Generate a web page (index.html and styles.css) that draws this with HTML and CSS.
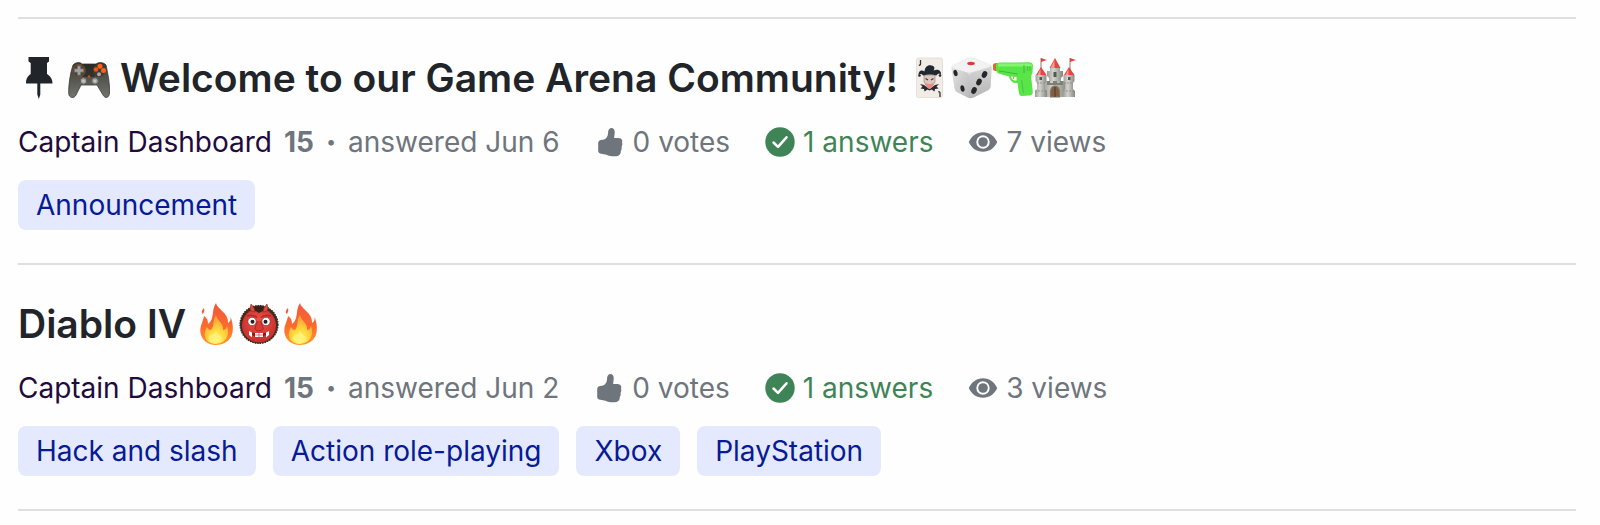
FILE: index.html
```
<!DOCTYPE html>
<html lang="en">
<head>
<meta charset="utf-8">
<meta name="viewport" content="width=device-width, initial-scale=1">
<title>Game Arena Community</title>
<link rel="stylesheet" href="styles.css">
</head>
<body>
<svg class="sprite" aria-hidden="true">
  <defs>
    <linearGradient id="pad" x1="0" y1="0" x2="0" y2="1"><stop offset="0" stop-color="#34352f"/><stop offset=".4" stop-color="#50514b"/><stop offset="1" stop-color="#73746e"/></linearGradient>
    <linearGradient id="fire" x1="0" y1="0" x2="0" y2="1"><stop offset="0" stop-color="#f4573c"/><stop offset=".55" stop-color="#fa6b2e"/><stop offset="1" stop-color="#ff9a2d"/></linearGradient>
    <radialGradient id="flame" cx=".5" cy=".85" r=".8"><stop offset="0" stop-color="#fff36b"/><stop offset=".45" stop-color="#ffd83c"/><stop offset="1" stop-color="#ff9838"/></radialGradient>
    <linearGradient id="stone" x1="0" y1="0" x2="1" y2="0"><stop offset="0" stop-color="#9c9e96"/><stop offset=".4" stop-color="#d3d4cd"/><stop offset="1" stop-color="#85877f"/></linearGradient>
    <radialGradient id="skin" cx=".5" cy=".4" r=".6"><stop offset="0" stop-color="#ef5548"/><stop offset="1" stop-color="#c92c2b"/></radialGradient>
    <linearGradient id="dieL" x1="0" y1="0" x2="1" y2="1"><stop offset="0" stop-color="#e2e2e2"/><stop offset="1" stop-color="#b9b9b9"/></linearGradient>
    <linearGradient id="dieR" x1="0" y1="0" x2="0" y2="1"><stop offset="0" stop-color="#d5d5d5"/><stop offset="1" stop-color="#b5b5b5"/></linearGradient>
  </defs>
  <symbol id="i-pin" viewBox="0 0 42 42"><path fill="#212529" d="M10.500 0h20.500v4.500l-2 1.500v11c3 2 5.500 4.500 5.500 9.500H22.300v11l-1.500 4.500-1.500-4.500v-11H8c0-5 1.800-7.500 4.700-9.500V6l-2.200-1.500z"/></symbol>
  <symbol id="i-gamepad" viewBox="0 0 42 42">
    <path fill="url(#pad)" stroke="#3b3c37" stroke-width=".8" d="M5 8C8 5 12 5 14 7h14c3-2 7-2 10 1 2 9 4 19 3.500 28-.2 5-4.500 6-6.500 2l-6-10H13L8 38C6 42 1 41 .7 36.500 .5 28 2 17 5 8z"/>
    <path fill="#25261f" d="M14 7h14l-1 13H15z" opacity=".7"/>
    <circle cx="11" cy="13.500" r="6.300" fill="#45433c" stroke="#8a4a28" stroke-width=".8"/>
    <path fill="#a0a19c" stroke="#62635e" stroke-width=".6" d="M9.300 8.800h3.400v3h3v3.400h-3v3H9.300v-3h-3v-3.400h3z"/>
    <circle cx="31" cy="13.500" r="6.300" fill="#3e3b35"/>
    <g fill="#ff6215"><circle cx="32" cy="9.300" r="2.500"/><circle cx="35.500" cy="13.500" r="2.500"/></g><circle cx="28" cy="12.500" r="2.200" fill="#f05518"/><circle cx="31" cy="17.300" r="2" fill="#aaa9a4"/>
    <circle cx="21" cy="19.500" r="1.200" fill="#c95019"/>
    <g fill="#a5a6a1" stroke="#5a5b56"><circle cx="15.500" cy="24" r="3.300"/><circle cx="27" cy="24" r="3.300"/></g>
    <g fill="#c5c6c1"><circle cx="15.500" cy="24" r="1.300"/><circle cx="27" cy="24" r="1.300"/></g>
  </symbol>
  <symbol id="i-joker" viewBox="0 0 42 42">
    <rect x="8.500" y="1" width="26" height="39.500" rx="2" fill="#f1ece5" stroke="#ded7cf" stroke-width=".7"/>
    <path fill="none" stroke="#33302f" stroke-width="1.300" d="M12.500 3v4q0 1.500-1.700 1.200M32 40v-4q0-1.500-1.700-1.200"/>
    <path fill="#272b30" d="M12 27l4 1 5.500 4 5.500-4 4-1-2.500 2.500 2 2-3.500.5-.5 2.500-3-2-2 1-2-1-3 2-.5-2.500-3.500-.5 2-2z"/>
    <path fill="#dcc8bf" stroke="#8b6862" stroke-width=".5" d="M16 18h11v7l-2.500 4-3 2-3-2-2.500-4z"/>
    <path fill="#f08a86" d="M17 25.500q4.500 3 9 0l-2 5-2.500 1.500-2.500-1.500z"/>
    <path stroke="#4a3a38" stroke-width="1.200" d="M17.500 21.500l2.500 1.500M25.500 21.500L23 23"/>
    <path fill="#222830" d="M15 18.500c-1-2-4-2-4.300 0-.7-5 3.300-6 5.800-4 .5-5 3.500-7 7-6 3.500.8 3.500 3 2 5 4-2 8.500 0 7.300 4.500-1-2-3.500-1.500-4.300.5q-6.500-2-13.500 0z"/>
    <g fill="#222830"><circle cx="11.500" cy="18.500" r="1.300"/><circle cx="32" cy="18.500" r="1.300"/></g>
  </symbol>
  <symbol id="i-die" viewBox="0 0 42 42">
    <path fill="#e0e0e0" d="M3 8Q1 9 1.500 12l3 19q.4 3 3 4.500l10 5q3 1 6 0l14-7q3-1.500 3.200-5L42 11q0-3-3-4L24 1q-3-1-6 0z"/>
    <path fill="#f2f2f2" d="M3 8l15-6.500q3-1.200 6 0l15 5.500q3 1.500 0 3l-17 5q-3 1-6 0L3 11q-2-1.500 0-3z"/>
    <path fill="url(#dieL)" d="M2 11l15 4.500q2 1 2.200 4L19 41 7 35Q5 34 4.500 31z"/><path fill="url(#dieR)" d="M41 10l-20 6q-2 1-2 4v21q2 .5 5-.8l13.500-6.700q3-1.500 3.200-5z"/>
    <ellipse cx="21" cy="6.500" rx="3.800" ry="1.700" fill="#e03737"/><g fill="#25262a"><ellipse cx="5.500" cy="16" rx="2" ry="3.200" transform="rotate(-15 5.500 16)"/><ellipse cx="12.500" cy="31.500" rx="2" ry="3.200" transform="rotate(-12 12.500 31.500)"/><ellipse cx="34.500" cy="17.500" rx="2.600" ry="3.500" transform="rotate(25 34.500 17.500)"/><ellipse cx="29" cy="25" rx="2.600" ry="3.500" transform="rotate(25 29 25)"/><ellipse cx="24" cy="33.500" rx="2.600" ry="3.500" transform="rotate(25 24 33.500)"/></g>
  </symbol>
  <symbol id="i-pistol" viewBox="0 0 42 42">
    <path fill="#df692c" d="M1 8q0-2 4-2v8q-4 0-4-2z"/>
    <path fill="#59e448" d="M4 7q1-1.500 4-1.500l29-.2q3.500.2 4 3L40.500 16q-1.500 2-1.200 5l1.500 14q0 3-3 3.500l-8 .5q-2.500 0-2.800-2.500L25.500 26q-7 1-8.500-6.500L6.500 16.500Q4 15 4 12z"/>
    <path fill="#82f66f" d="M6 6.500h31q3 0 3.500 3H6z"/><path fill="none" stroke="#3fba3c" d="M7 14l19 3M32 8v8"/><path fill="#fff" d="M19 19.500l5.500.5v3.500q-4.500.5-5.500-4z"/><path stroke="#c89c62" stroke-width="1.300" d="M21.500 19.500v2.500"/>
    <path fill="none" stroke="#45cc40" stroke-width="1.200" d="M29.500 23l2 13M35.500 9v5M38 9v5"/>
  </symbol>
  <symbol id="i-castle" viewBox="0 0 42 42">
    <path fill="url(#stone)" d="M13 14h3v-3h10v3h3v5l-2 2v19H15V21l-2-2z"/>
    <path fill="url(#stone)" d="M9 24h24v16H9z"/>
    <path fill="url(#stone)" d="M1.500 18h11v6L11 26v6l2 2v6H1v-6l2-2v-6l-1.500-2z"/>
    <path fill="url(#stone)" d="M29.500 18h11v6L39 26v6l2 2v6H29v-6l2-2v-6l-1.500-2z"/>
    <path fill="#7d8077" d="M13 24h3v2h3v-2h4v2h3v-2h3v4H13z"/>
    <path fill="#e54642" d="M21 1l5.500 10h-11zM7 10l5.500 8H2zM35 10l5.500 8H30zM7 1l6 2-6 2zM36 1l6 2-6 2z"/><path stroke="#985047" stroke-width=".8" d="M7 1v11M36 1v12"/>
    <path fill="#f59b94" d="M20.500 3v8h-4zM6.500 12v6h-3zM34.500 12v6h-3z"/><path fill="#555850" d="M19.500 15h3v5h-3zM5.500 20h2.500v3H5.500zM34 20h2.500v3H34z"/>
    <path fill="#855d40" stroke="#797a71" stroke-width="1.200" d="M16.500 40v-6q1-5 4.500-5t4.500 5v6z"/><path stroke="#513826" d="M21 30v10"/><path fill="none" stroke="#8a8c83" stroke-width=".8" stroke-dasharray="2 1" d="M3 26h9m18 0h9M1 34h12m16 0h12"/>
  </symbol>
  <symbol id="i-fire" viewBox="0 0 42 42">
    <path fill="url(#fire)" d="M20 0c1 6 13 10 12 20 2-1 3-3 2.500-6 3 7 3 14 1 19-3 6-9 9-16 9S6 38 4.500 30C3.500 23 7 19 8 13c3 2 4 4 4 8 7-5 3-14 8-21zM8 5q1 4-1.500 6Q4.500 8 8 5z"/>
    <path fill="url(#flame)" d="M20 12c1 6 8 8 7 15 2 0 3-1 4-4 3 8 0 17-11 18-10 0-14-9-9-17 1 2 2 3 4 3 4-5 1-9 5-15z"/><path fill="#fff47d" opacity=".8" d="M20 27c0 5 6 4 6 9s-12 6-13 1c-1-4 1-4 2-6 1 2 4 0 5-4z"/>
  </symbol>
  <symbol id="i-ogre" viewBox="0 0 42 42">
    <circle cx="21" cy="21.500" r="19" fill="#442a21" stroke="#35261c" stroke-width="1.200" stroke-dasharray="1.500 1"/><circle cx="21" cy="22.500" r="17" fill="url(#skin)"/><path fill="#352218" d="M12 7Q21 0 30 7q-5 0-9 3-4-3-9-3z"/>
    <path fill="#e14b3c" stroke="#8d241d" stroke-width=".6" d="M13 1q4 4 4 8-4 0-5-3zM29 1q-4 4-4 8 4 0 5-3z"/>
    <path fill="none" stroke="#a82a25" stroke-width="1.200" d="M9 13q6-2 10 1.500M33 13q-6-2-10 1.500"/><g fill="#fff" stroke="#87231f" stroke-width=".7"><circle cx="14" cy="18.500" r="4.200"/><circle cx="28" cy="18.500" r="4.200"/></g><g fill="#222"><circle cx="14.500" cy="18.800" r="2"/><circle cx="27.500" cy="18.800" r="2"/></g>
    <path fill="#db3a35" stroke="#9a2020" stroke-width=".7" d="M19.500 18l-3 8q4.500 4 9 0l-3-8"/><path fill="#8a1c1c" d="M12 29q9 3 18 0-2 5-9 5-7 0-9-5z"/><path fill="#fff" d="M11 28l3 1.500v5l-3-2.500zM31 28l-3 1.500v5l3-2.500zM17 30h8v4h-8z"/><path stroke="#b64b45" stroke-width=".7" d="M21 30v4M17 32h8"/>
  </symbol>
  <symbol id="i-thumb" viewBox="0 0 30 30"><path fill="#6e757c" d="M16 1c2-.3 3.500 1.200 3.700 3.500.2 2.500-.6 4.500-.5 6.500 2.500.2 5.500-.5 7.300 1.200 1 1 .9 2 .5 3 .6 2 .3 3-.4 4.500.3 2 0 3-.8 4.300 0 2.500-.8 4.500-3.300 5-4 .5-8 .2-11-1.300L5 26.500C4 26 3.200 25 3.200 24v-7.500c0-3 2-3.500 5-3.700 3-.8 4.600-3 4.800-6C13 4 13.500 1.500 16 1z"/></symbol>
  <symbol id="i-check" viewBox="0 0 30 30"><circle cx="15" cy="15" r="14.700" fill="#3f8456"/><path fill="none" stroke="#fff" stroke-width="2.500" stroke-linecap="round" stroke-linejoin="round" d="M8.500 15.500l4.500 4.300 8.500-9.500"/></symbol>
  <symbol id="i-eye" viewBox="0 0 30 30"><path fill="#6e757c" fill-rule="evenodd" d="M.8 15C3.500 9 8.500 5.200 15 5.200S26.500 9 29.200 15C26.500 21 21.500 24.800 15 24.800S3.500 21 .8 15zM15 8.300a6.700 6.700 0 1 0 0 13.400 6.700 6.700 0 0 0 0-13.400z"/><circle cx="15" cy="15" r="4.800" fill="#6e757c"/></symbol>
</svg>
<main class="topics">
  <article class="topic">
    <h2 class="title">
      <svg class="emoji"><use href="#i-pin"/></svg>
      <a class="title-link" href="#"><svg class="emoji"><use href="#i-gamepad"/></svg><span>Welcome to our Game Arena Community!</span><span class="emoji-run"><svg class="emoji"><use href="#i-joker"/></svg><svg class="emoji"><use href="#i-die"/></svg><svg class="emoji"><use href="#i-pistol"/></svg><svg class="emoji"><use href="#i-castle"/></svg></span></a>
    </h2>
    <div class="meta">
      <div class="byline"><a class="author" href="#">Captain Dashboard</a><strong>15</strong><span class="dot">•</span><span>answered Jun 6</span></div>
      <span class="stat"><svg class="icon"><use href="#i-thumb"/></svg>0 votes</span>
      <span class="stat answered"><svg class="icon"><use href="#i-check"/></svg>1 answers</span>
      <span class="stat"><svg class="icon"><use href="#i-eye"/></svg>7 views</span>
    </div>
    <div class="tags"><a class="tag" href="#">Announcement</a></div>
  </article>
  <article class="topic">
    <h2 class="title">
      <a class="title-link" href="#"><span>Diablo IV</span><span class="emoji-run"><svg class="emoji"><use href="#i-fire"/></svg><svg class="emoji"><use href="#i-ogre"/></svg><svg class="emoji"><use href="#i-fire"/></svg></span></a>
    </h2>
    <div class="meta">
      <div class="byline"><a class="author" href="#">Captain Dashboard</a><strong>15</strong><span class="dot">•</span><span>answered Jun 2</span></div>
      <span class="stat"><svg class="icon"><use href="#i-thumb"/></svg>0 votes</span>
      <span class="stat answered"><svg class="icon"><use href="#i-check"/></svg>1 answers</span>
      <span class="stat"><svg class="icon"><use href="#i-eye"/></svg>3 views</span>
    </div>
    <div class="tags"><a class="tag" href="#">Hack and slash</a><a class="tag" href="#">Action role-playing</a><a class="tag" href="#">Xbox</a><a class="tag" href="#">PlayStation</a></div>
  </article>
</main>
</body>
</html>
```
FILE: styles.css
```
* { box-sizing: border-box; }
body {
  margin: 0;
  background: #fefefe;
  color: #6e757c;
  font: 28px/40px Inter, "Liberation Sans", sans-serif;
}
a { color: inherit; text-decoration: none; }
.sprite { position: absolute; width: 0; height: 0; }
.topics { margin: 17px 24px 0 18px; border-bottom: 2px solid #dfdfdf; }
.topic { padding: 33px 0; border-top: 2px solid #dfdfdf; }
.title {
  display: flex;
  align-items: center;
  gap: 8px;
  margin: 0;
  color: #212529;
  font-size: 39px;
  font-weight: 600;
  line-height: 52px;
}
.title-link { display: flex; align-items: center; gap: 10px; }
.emoji-run { display: flex; }
.emoji { display: block; flex: none; width: 42px; height: 42px; }
.meta { display: flex; align-items: center; gap: 35px; margin-top: 18px; }
.byline { display: flex; align-items: center; gap: 12px; }
.author { color: #210b3d; }
.dot { font-size: 18px; }
.stat { display: flex; align-items: center; gap: 8px; }
.icon { display: block; width: 30px; height: 30px; }
.answered { color: #3f8456; }
.tags { display: flex; flex-wrap: wrap; gap: 17px; margin-top: 18px; }
.tag {
  padding: 5px 18px;
  border-radius: 8px;
  background: #e5e9fd;
  color: #061b94;
}
```
